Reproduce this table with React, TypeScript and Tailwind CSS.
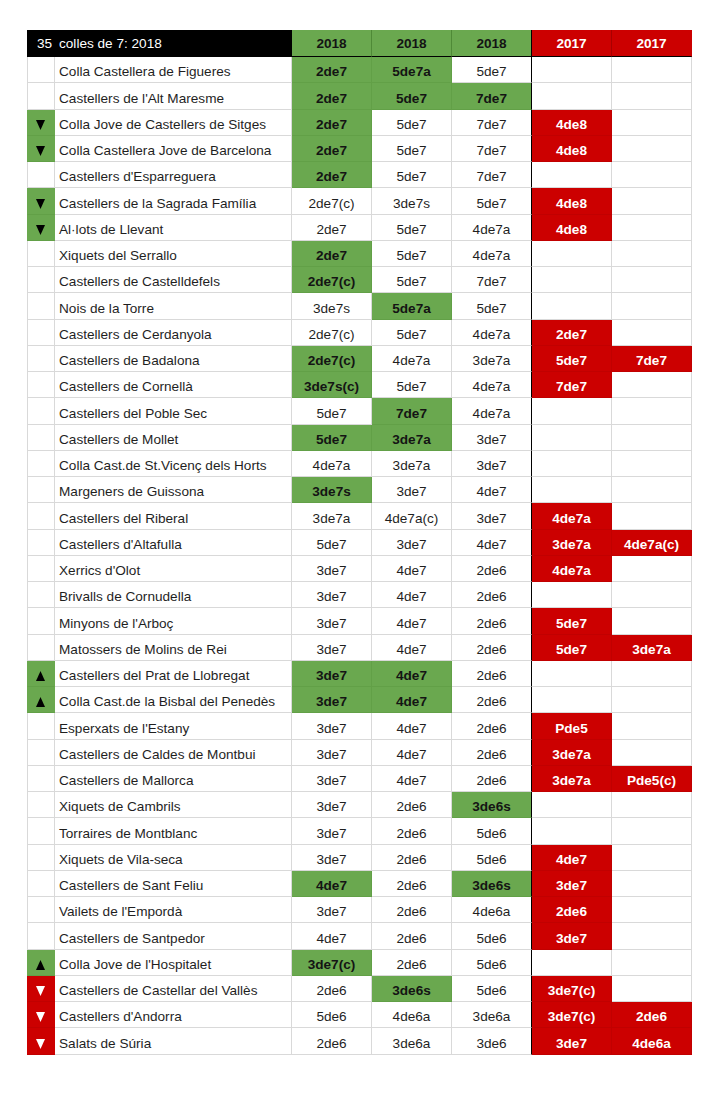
import React from "react";

type Row = [string, string, string[]];

const rows: Row[] = [
  ["", "Colla Castellera de Figueres", ["G2de7", "G5de7a", "5de7", "", ""]],
  ["", "Castellers de l'Alt Maresme", ["G2de7", "G5de7", "G7de7", "", ""]],
  ["dg", "Colla Jove de Castellers de Sitges", ["G2de7", "5de7", "7de7", "R4de8", ""]],
  ["dg", "Colla Castellera Jove de Barcelona", ["G2de7", "5de7", "7de7", "R4de8", ""]],
  ["", "Castellers d'Esparreguera", ["G2de7", "5de7", "7de7", "", ""]],
  ["dg", "Castellers de la Sagrada Família", ["2de7(c)", "3de7s", "5de7", "R4de8", ""]],
  ["dg", "Al·lots de Llevant", ["2de7", "5de7", "4de7a", "R4de8", ""]],
  ["", "Xiquets del Serrallo", ["G2de7", "5de7", "4de7a", "", ""]],
  ["", "Castellers de Castelldefels", ["G2de7(c)", "5de7", "7de7", "", ""]],
  ["", "Nois de la Torre", ["3de7s", "G5de7a", "5de7", "", ""]],
  ["", "Castellers de Cerdanyola", ["2de7(c)", "5de7", "4de7a", "R2de7", ""]],
  ["", "Castellers de Badalona", ["G2de7(c)", "4de7a", "3de7a", "R5de7", "R7de7"]],
  ["", "Castellers de Cornellà", ["G3de7s(c)", "5de7", "4de7a", "R7de7", ""]],
  ["", "Castellers del Poble Sec", ["5de7", "G7de7", "4de7a", "", ""]],
  ["", "Castellers de Mollet", ["G5de7", "G3de7a", "3de7", "", ""]],
  ["", "Colla Cast.de St.Vicenç dels Horts", ["4de7a", "3de7a", "3de7", "", ""]],
  ["", "Margeners de Guissona", ["G3de7s", "3de7", "4de7", "", ""]],
  ["", "Castellers del Riberal", ["3de7a", "4de7a(c)", "3de7", "R4de7a", ""]],
  ["", "Castellers d'Altafulla", ["5de7", "3de7", "4de7", "R3de7a", "R4de7a(c)"]],
  ["", "Xerrics d'Olot", ["3de7", "4de7", "2de6", "R4de7a", ""]],
  ["", "Brivalls de Cornudella", ["3de7", "4de7", "2de6", "", ""]],
  ["", "Minyons de l'Arboç", ["3de7", "4de7", "2de6", "R5de7", ""]],
  ["", "Matossers de Molins de Rei", ["3de7", "4de7", "2de6", "R5de7", "R3de7a"]],
  ["ug", "Castellers del Prat de Llobregat", ["G3de7", "G4de7", "2de6", "", ""]],
  ["ug", "Colla Cast.de la Bisbal del Penedès", ["G3de7", "G4de7", "2de6", "", ""]],
  ["", "Esperxats de l'Estany", ["3de7", "4de7", "2de6", "RPde5", ""]],
  ["", "Castellers de Caldes de Montbui", ["3de7", "4de7", "2de6", "R3de7a", ""]],
  ["", "Castellers de Mallorca", ["3de7", "4de7", "2de6", "R3de7a", "RPde5(c)"]],
  ["", "Xiquets de Cambrils", ["3de7", "2de6", "G3de6s", "", ""]],
  ["", "Torraires de Montblanc", ["3de7", "2de6", "5de6", "", ""]],
  ["", "Xiquets de Vila-seca", ["3de7", "2de6", "5de6", "R4de7", ""]],
  ["", "Castellers de Sant Feliu", ["G4de7", "2de6", "G3de6s", "R3de7", ""]],
  ["", "Vailets de l'Empordà", ["3de7", "2de6", "4de6a", "R2de6", ""]],
  ["", "Castellers de Santpedor", ["4de7", "2de6", "5de6", "R3de7", ""]],
  ["ug", "Colla Jove de l'Hospitalet", ["G3de7(c)", "2de6", "5de6", "", ""]],
  ["dr", "Castellers de Castellar del Vallès", ["2de6", "G3de6s", "5de6", "R3de7(c)", ""]],
  ["dr", "Castellers d'Andorra", ["5de6", "4de6a", "3de6a", "R3de7(c)", "R2de6"]],
  ["dr", "Salats de Súria", ["2de6", "3de6a", "3de6", "R3de7", "R4de6a"]],
];

const grid = "grid grid-cols-[28px_237px_80px_80px_80px_80px_80px]";

function Tri({ up, color }: { up: boolean; color: string }) {
  return (
    <svg width="9" height="10" viewBox="0 0 9 10" className="block">
      {up ? (
        <polygon points="0,10 9,10 4.5,0" fill={color} />
      ) : (
        <polygon points="0,0 9,0 4.5,10" fill={color} />
      )}
    </svg>
  );
}

function IconCell({ code }: { code: string }) {
  if (code === "dg" || code === "ug") {
    return (
      <div className="flex items-end justify-start pl-[8px] pb-[5px] bg-[#6aa84f] border-l border-l-[#6aa84f] border-r border-r-[#6aa84f] border-b border-b-[#62a047]">
        <Tri up={code === "ug"} color="#000000" />
      </div>
    );
  }
  if (code === "dr") {
    return (
      <div className="flex items-end justify-start pl-[8px] pb-[5px] bg-[#cc0000] border-l border-l-[#cc0000] border-r border-r-[#cc0000] border-b border-b-[#c10000]">
        <Tri up={false} color="#ffffff" />
      </div>
    );
  }
  return <div className="bg-white border-l border-l-[#d9d9d9] border-r border-r-[#d9d9d9] border-b border-b-[#d9d9d9]" />;
}

function DataCell({ v, idx }: { v: string; idx: number }) {
  const black = idx === 2;
  if (v.startsWith("G")) {
    return (
      <div
        className={
          "flex items-end justify-center pb-[3px] bg-[#6aa84f] font-bold text-[#141414] border-b border-b-[#62a047] border-r " +
          (black ? "border-r-black" : "border-r-[#62a047]")
        }
      >
        {v.slice(1)}
      </div>
    );
  }
  if (v.startsWith("R")) {
    return (
      <div className="flex items-end justify-center pb-[3px] bg-[#cc0000] font-bold text-white border-b border-b-[#c10000] border-r border-r-[#c10000]">
        {v.slice(1)}
      </div>
    );
  }
  return (
    <div
      className={
        "flex items-end justify-center pb-[3px] bg-white text-[#1f1f1f] border-b border-b-[#d9d9d9] border-r " +
        (black ? "border-r-black" : "border-r-[#d9d9d9]")
      }
    >
      {v}
    </div>
  );
}

export default function App() {
  return (
    <div
      className="min-h-[1101px] w-[714px] bg-white pt-[30px] pl-[27px] text-[13.6px] leading-[normal]"
      style={{ fontFamily: "Arial, 'Liberation Sans', sans-serif" }}
    >
      <div className="w-[665px]">
        <div className={grid + " h-[27px]"}>
          <div className="flex items-end justify-end pr-[3px] pb-[5px] bg-black text-white border-b border-b-black">35</div>
          <div className="flex items-end pl-[4px] pb-[5px] bg-black text-white border-b border-b-black">colles de 7: 2018</div>
          <div className="flex items-end justify-center pb-[5px] bg-[#6aa84f] font-bold text-[#141414] border-b border-b-black border-r border-r-[#4f8a37]">2018</div>
          <div className="flex items-end justify-center pb-[5px] bg-[#6aa84f] font-bold text-[#141414] border-b border-b-black border-r border-r-[#4f8a37]">2018</div>
          <div className="flex items-end justify-center pb-[5px] bg-[#6aa84f] font-bold text-[#141414] border-b border-b-black border-r border-r-black">2018</div>
          <div className="flex items-end justify-center pb-[5px] bg-[#cc0000] font-bold text-white border-b border-b-black border-r border-r-[#a80000]">2017</div>
          <div className="flex items-end justify-center pb-[5px] bg-[#cc0000] font-bold text-white border-b border-b-black border-r border-r-[#cc0000]">2017</div>
        </div>
        {rows.map(([icon, name, cells], i) => (
          <div key={i} className={grid + " h-[26.25px]"}>
            <IconCell code={icon} />
            <div className="flex items-end pl-[4px] pb-[3px] bg-white text-[#1f1f1f] whitespace-nowrap overflow-hidden border-b border-b-[#d9d9d9] border-r border-r-[#d9d9d9]">
              {name}
            </div>
            {cells.map((c, j) => (
              <DataCell key={j} v={c} idx={j} />
            ))}
          </div>
        ))}
      </div>
    </div>
  );
}
